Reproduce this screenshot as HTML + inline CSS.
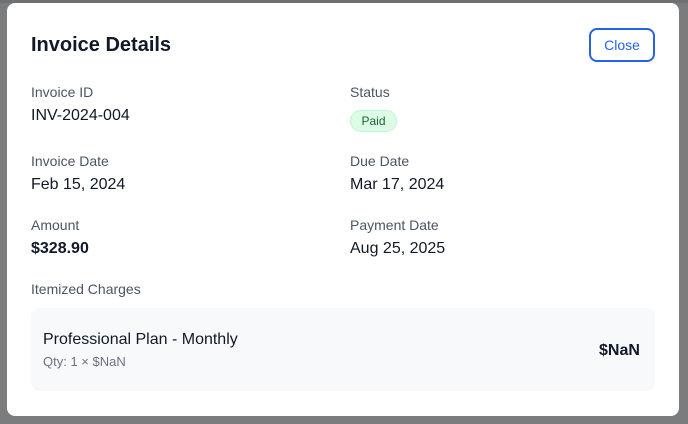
<!DOCTYPE html>
<html><head><style>
*{margin:0;padding:0;box-sizing:border-box}
body{width:688px;height:424px;background:#7b7c7d;font-family:"Liberation Sans",sans-serif;position:relative;overflow:hidden;color:#111827}
.m{position:absolute;left:7px;top:3px;width:672px;height:413px;background:#fff;border-radius:8px}
.a{position:absolute;white-space:nowrap}
.l{font-size:14px;color:#4b5563}
.v{font-size:16px;color:#111827}
</style></head><body>
<div class="a" style="left:0;top:0;width:688px;height:3px;background:#6f7071"></div>
<div class="m"></div>
<div class="a" style="left:31px;top:34px;font-size:20px;font-weight:bold;color:#111827">Invoice Details</div>
<div class="a" style="left:589px;top:28px;width:66px;height:34px;border:2px solid #2563eb;border-radius:8px;color:#2563eb;font-size:14px;text-align:center;line-height:30px">Close</div>
<div class="a l" style="left:31px;top:84px">Invoice ID</div>
<div class="a v" style="left:31px;top:107px">INV-2024-004</div>
<div class="a l" style="left:350px;top:84px">Status</div>
<div class="a" style="left:350px;top:110px;width:47px;height:22px;background:#dcfce7;border:1px solid #bbf7d0;border-radius:11px;color:#166534;font-size:12px;text-align:center;line-height:20px">Paid</div>
<div class="a l" style="left:31px;top:153px">Invoice Date</div>
<div class="a v" style="left:31px;top:176px">Feb 15, 2024</div>
<div class="a l" style="left:350px;top:153px">Due Date</div>
<div class="a v" style="left:350px;top:176px">Mar 17, 2024</div>
<div class="a l" style="left:31px;top:217px">Amount</div>
<div class="a v" style="left:31px;top:240px;font-weight:bold">$328.90</div>
<div class="a l" style="left:350px;top:217px">Payment Date</div>
<div class="a v" style="left:350px;top:240px">Aug 25, 2025</div>
<div class="a l" style="left:31px;top:281px">Itemized Charges</div>
<div class="a" style="left:31px;top:308px;width:624px;height:83px;background:#f8f9fb;border-radius:8px"></div>
<div class="a v" style="left:43px;top:331px">Professional Plan - Monthly</div>
<div class="a" style="left:43px;top:354px;font-size:13px;color:#6b7280">Qty: 1 × $NaN</div>
<div class="a v" style="left:599px;top:342px;font-weight:bold">$NaN</div>
</body></html>
